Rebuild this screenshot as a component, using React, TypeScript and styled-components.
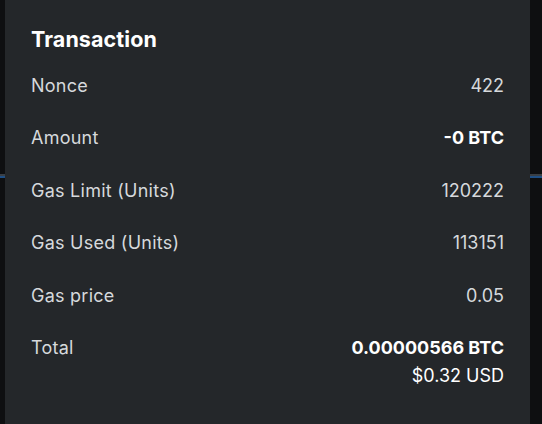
import React from "react";
import styled, { createGlobalStyle } from "styled-components";

const GlobalStyle = createGlobalStyle`
  html, body {
    margin: 0;
    padding: 0;
    background: #0e0f11;
  }
  body {
    font-family: "Inter", "Noto Sans", sans-serif;
    -webkit-font-smoothing: antialiased;
  }
`;

const rows = [
  { label: "Nonce", value: "422" },
  { label: "Amount", value: "-0 BTC", strong: true },
  { label: "Gas Limit (Units)", value: "120222" },
  { label: "Gas Used (Units)", value: "113151" },
  { label: "Gas price", value: "0.05" },
];

function App() {
  return (
    <>
      <GlobalStyle />
      <Page>
        <Divider />
        <Modal>
          <Title>Transaction</Title>
          <List>
            {rows.map((r) => (
              <Row key={r.label}>
                <Label>{r.label}</Label>
                <Value strong={r.strong}>{r.value}</Value>
              </Row>
            ))}
            <Row>
              <Label>Total</Label>
              <Values>
                <Value strong>0.00000566 BTC</Value>
                <Value light>$0.32 USD</Value>
              </Values>
            </Row>
          </List>
        </Modal>
      </Page>
    </>
  );
}

const Page = styled.div`
  position: relative;
  width: 542px;
  height: 424px;
  overflow: hidden;
  padding-top: 174px;
  box-sizing: border-box;
`;

const Divider = styled.div`
  height: 2px;
  background: #3a3f45;
  border-bottom: 2px solid #1f4f85;
`;

const Modal = styled.div`
  position: absolute;
  top: 0;
  left: 5px;
  width: 525px;
  height: 424px;
  background: #24272a;
  padding: 25px 26px 0 26px;
  box-sizing: border-box;
`;

const Title = styled.div`
  font-size: 21.5px;
  font-weight: 700;
  line-height: 28px;
  color: #ffffff;
  letter-spacing: 0.1px;
`;

const List = styled.div`
  display: flex;
  flex-direction: column;
  gap: 24.5px;
  margin-top: 18.5px;
`;

const Row = styled.div`
  display: flex;
  justify-content: space-between;
  align-items: flex-start;
`;

const Label = styled.div`
  font-size: 18px;
  line-height: 28px;
  color: #d6d9dc;
  letter-spacing: 0.25px;
`;

const Values = styled.div`
  display: flex;
  flex-direction: column;
  align-items: flex-end;
`;

const Value = styled.div<{ strong?: boolean; light?: boolean }>`
  font-size: 18px;
  line-height: 28px;
  font-weight: ${(p) => (p.strong ? 700 : 400)};
  color: ${(p) => (p.strong || p.light ? "#ffffff" : "#d6d9dc")};
`;

export default App;
